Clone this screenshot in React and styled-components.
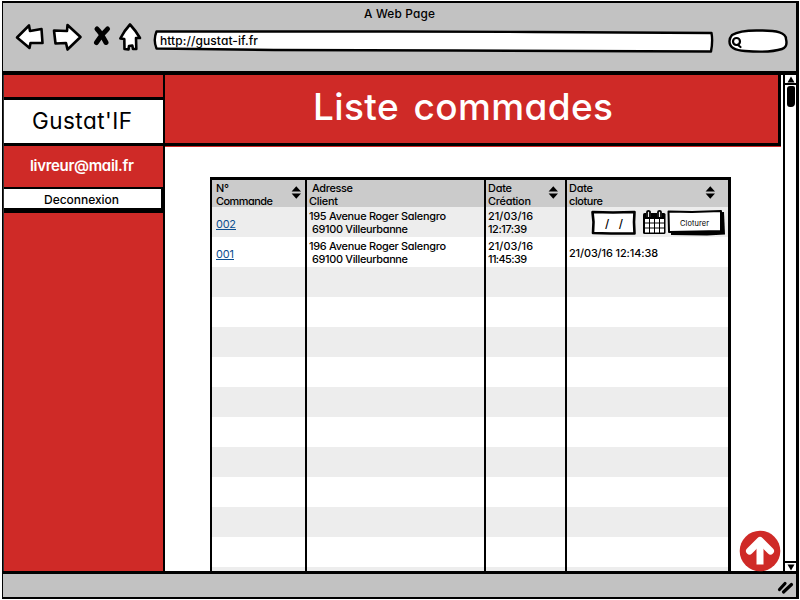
import React, { useLayoutEffect, useRef, useState } from "react";
import styled, { createGlobalStyle } from "styled-components";

const RED = "#cf2a27";
const GREY = "#c2c2c2";

const GlobalStyle = createGlobalStyle`
  * { box-sizing: border-box; }
  html, body { margin: 0; padding: 0; background: #fff; }
  body {
    width: 800px; height: 600px; overflow: hidden;
    font-family: Inter, "Open Sans", sans-serif;
    font-feature-settings: "cv11";
    color: #000;
  }
  svg { display: block; overflow: visible; flex: none; }
`;

const Window = styled.div`
  width: 797px;
  height: 598px;
  margin: 1px 1px 1px 2px;
  border: 2px solid #000;
  border-left-width: 1px;
  border-right-width: 3px;
  display: flex;
  flex-direction: column;
`;

const Chrome = styled.header`
  height: 68px;
  background: ${GREY};
  padding-top: 1px;
`;

const WindowTitle = styled.div`
  height: 18px;
  line-height: 17px;
  padding-left: 361px;
`;

const Toolbar = styled.div`
  display: flex;
  align-items: flex-start;
  padding-left: 13px;
`;

const UrlBar = styled.div`
  position: relative;
  width: 560px;
  height: 23px;
  margin: 8px 0 0 10px;
`;

const Backdrop = styled.svg`
  position: absolute;
  inset: 0;
`;

const UrlText = styled.div`
  position: relative;
  padding-left: 6px;
  line-height: 19px;
`;

const SearchBox = styled.div`
  margin: 7px 0 0 14px;
`;

const Body = styled.main`
  flex: 1;
  display: flex;
  border-top: 4px solid #000;
  border-bottom: 3px solid #000;
  min-height: 0;
`;

const Sidebar = styled.aside`
  width: 162px;
  background: ${RED};
  border-left: 1px solid #333;
  border-right: 2px solid #000;
  display: flex;
  flex-direction: column;
`;

const Brand = styled.div`
  height: 49px;
  margin-top: 22px;
  background: #fff;
  border-top: 3px solid #000;
  border-bottom: 3px solid #000;
  padding-left: 28px;
  line-height: 42px;
`;

const UserMail = styled.div`
  height: 41px;
  line-height: 39px;
  padding-left: 26px;
  color: #fff;
`;

const Logout = styled.div`
  height: 26px;
  background: #fff;
  border: solid #000;
  border-width: 2px 2px 5px 0;
  padding-left: 40px;
  line-height: 18px;
`;

const Page = styled.section`
  width: 618px;
  display: flex;
  flex-direction: column;
  background: #fff;
  min-height: 0;
`;

const Banner = styled.h1`
  flex: none;
  margin: 0;
  height: 71px;
  width: 616px;
  background: ${RED};
  border-right: 3px solid #000;
  border-bottom: 3px solid #000;
  box-shadow: 0 1px 0 ${RED};
  color: #fff;
  padding-left: 148px;
  line-height: 63px;
  word-spacing: 4px;
`;

const Content = styled.div`
  flex: 1;
  display: flex;
  padding: 31px 0 0 45px;
  min-height: 0;
`;

const Grid = styled.div`
  width: 521px;
  border: solid #000;
  border-width: 3px 3px 0 2px;
  display: flex;
  flex-direction: column;
  overflow: hidden;
`;

const Row = styled.div`
  flex: none;
  display: grid;
  grid-template-columns: 95px 179px 81px 161px;
  height: ${(p) => (p.$head ? 27 : 30)}px;
  background: ${(p) => (p.$head ? "#cbcbcb" : p.$odd ? "#ededed" : "#fff")};
`;

const Cell = styled.div`
  display: flex;
  align-items: center;
  justify-content: space-between;
  padding: 0 ${(p) => p.$right || 0}px ${(p) => p.$bottom || 0}px ${(p) => p.$left || 2}px;
  border-right: ${(p) => (p.$last ? 0 : 2)}px solid #000;
`;

const Lines = styled.div`
  display: flex;
  flex-direction: column;
`;

const Line = styled.div`
  height: 13px;
  line-height: 13px;
  padding-left: ${(p) => p.$indent || 0}px;
`;

const OrderLink = styled.a`
  color: #0a4d8f;
  line-height: 13px;
  border-bottom: 1px solid #0a4d8f;
  height: 14px;
  margin-top: 1px;
`;

const ClosedAt = styled.div`
  line-height: 13px;
`;

const Editor = styled.div`
  display: flex;
  align-items: flex-start;
  padding: 2px 0 0 22px;
`;

const DateField = styled.div`
  position: relative;
  width: 45px;
  height: 26px;
  padding-left: 14px;
  line-height: 25px;
`;

const CalendarSlot = styled.div`
  margin: 0 1px 0 7px;
`;

const CloseButton = styled.div`
  position: relative;
  width: 59px;
  height: 26px;
  padding-left: 13px;
  line-height: 21px;
`;

const FloatingUp = styled.div`
  position: absolute;
  left: 739px;
  top: 530px;
`;

const Scrollbar = styled.div`
  width: 13px;
  border-left: 2px solid #000;
  background: #fff;
  display: flex;
  flex-direction: column;
`;

const ScrollButton = styled.div`
  height: 10px;
  padding: 1px 0 0 2px;
  border: solid #000;
  border-width: ${(p) => (p.$bottom ? "2px 0 0" : "0 0 2px")};
`;

const Track = styled.div`
  flex: 1;
  padding: 1px 0 0 2px;
`;

const Thumb = styled.div`
  width: 8px;
  height: 21px;
  background: #000;
  border-radius: 3px 2px 4px 3px;
`;

const Footer = styled.footer`
  height: 23px;
  background: ${GREY};
  display: flex;
  justify-content: flex-end;
  padding: 7px 2px 0 0;
`;

const Word = styled.span`
  position: relative;
  display: inline-block;
  white-space: pre;
  font-size: ${(p) => p.$size}px;
  font-weight: ${(p) => p.$weight};
`;

// Text whose tracking is adjusted so that it fills the given width.
function Text({ children, width, size = 10.9, weight = 500 }) {
  const ref = useRef(null);
  const [tracking, setTracking] = useState(0);
  useLayoutEffect(() => {
    const natural = ref.current.getBoundingClientRect().width;
    setTracking((width - natural) / Math.max(1, children.length - 1));
  }, []);
  return (
    <Word ref={ref} $size={size} $weight={weight} style={{ letterSpacing: tracking, marginRight: -tracking }}>
      {children}
    </Word>
  );
}

const ink = { stroke: "#000", strokeWidth: 2.6, strokeLinejoin: "round", strokeLinecap: "round", fill: "#fff" };

const NavIcons = () => (
  <svg width="128" height="30" viewBox="16 22 128 30">
    <path {...ink} d="M17 37.500 L29 25.500 L30 31 L41.500 29 L42.500 43 L30.500 43 L29.500 48 Z" />
    <path {...ink} d="M54 30.500 L67 31 L67.500 25 L80.500 37 L67.500 49.500 L66 43 L55.500 43.500 Z" />
    <path d="M97 29 Q101 33 106 42.500 M107.500 29 Q101 35 96.500 42.500" stroke="#000" strokeWidth="5" strokeLinecap="round" fill="none" />
    <path {...ink} d="M130 24.500 Q136 31 140 38 L136 38 L136.300 49 L133 49 L132.300 45.500 L129 46 L128.500 49.500 L124.500 49 L124.300 39 L120.300 38.500 Q124 31 130 24.500 Z" />
  </svg>
);

const SortIcon = () => (
  <svg width="10" height="13" viewBox="0 0 10 13">
    <path d="M5.300 -.7 L10 4.500 H.6Z M5.300 11.700 L10 6.500 H.6Z" />
  </svg>
);

const CalendarIcon = () => (
  <svg width="23" height="24" viewBox="0 0 23 24">
    <rect x="0" y="3" width="22.500" height="21" rx="1.500" />
    <path fill="#ededed" d="M3 2h5v5H3zM14 2h5v5h-5z" />
    <path fill="none" stroke="#000" strokeWidth="1.800" d="M4 8V2Q4 .8 5.500 .8T7 2V7M15 7V2Q15 .8 16.500 .8T18 2V7" />
    <path fill="#fff" d="M2 9h4v3.500H2zM7 9h4v3.500H7zM12 9h4v3.500h-4zM17 9h4v3.500h-4zM2 13.500h4v4H2zM7 13.500h4v4H7zM12 13.500h4v4h-4zM17 13.500h4v4h-4zM2 18.500h4v4H2zM7 18.500h4v4H7zM12 18.500h4v4h-4zM17 18.500h4v4h-4z" />
  </svg>
);

const HEAD = [
  { lines: [["N°", 13], ["Commande", 57]], left: 4, right: 4, sort: true },
  { lines: [["Adresse", 41, 3], ["Client", 29]], left: 2 },
  { lines: [["Date", 24], ["Création", 43]], left: 2, right: 7, sort: true },
  { lines: [["Date", 24], ["cloture", 34]], left: 2, right: 13, sort: true, last: true },
];

const ORDERS = [
  { id: "002", idWidth: 20, street: "195 Avenue Roger Salengro", time: "12:17:39", timeWidth: 39 },
  { id: "001", idWidth: 18, street: "196 Avenue Roger Salengro", time: "11:45:39", timeWidth: 39, closed: "21/03/16 12:14:38" },
];

const Stack = ({ lines }) => (
  <Lines>
    {lines.map(([t, w, indent]) => (
      <Line key={t} $indent={indent}><Text width={w}>{t}</Text></Line>
    ))}
  </Lines>
);

const CloseEditor = () => (
  <Editor>
    <DateField>
      <Backdrop width="45" height="26" viewBox="0 0 45 26">
        <path {...ink} d="M1.500 2 L22 2.500 L43.500 2 L43 12 L43.500 23.500 L20 23.500 L2 23 L2.500 12Z" />
      </Backdrop>
      <Text width={18} size={11.5}>{"/  /"}</Text>
    </DateField>
    <CalendarSlot><CalendarIcon /></CalendarSlot>
    <CloseButton>
      <Backdrop width="59" height="26" viewBox="0 0 59 26">
        <path d="M4 4 L57 2 L58 24.500 L40 25.500 L4 25Z" />
        <path {...ink} strokeWidth="2" d="M1.500 1.500 L25 2 L54 1 L54 21 L30 21.500 L2 22Z" />
      </Backdrop>
      <Text width={29} size={7.4} weight={400}>Cloturer</Text>
    </CloseButton>
  </Editor>
);

export default function App() {
  return (
    <>
      <GlobalStyle />
      <Window>
        <Chrome>
          <WindowTitle><Text width={71} size={11.8}>A Web Page</Text></WindowTitle>
          <Toolbar>
            <NavIcons />
            <UrlBar>
              <Backdrop width="560" height="23" viewBox="0 0 560 23">
                <path {...ink} strokeWidth="2.400" d="M2.500 1.500 L240 1.500 L380 2 L557.500 3 Q559 11 557 21.500 L300 20.500 L120 20 L2.500 18.500 Q-1 10 2.500 1.500Z" />
              </Backdrop>
              <UrlText><Text width={98} size={12}>http://gustat-if.fr</Text></UrlText>
            </UrlBar>
            <SearchBox>
              <svg width="60" height="24" viewBox="0 0 60 24">
                <path {...ink} strokeWidth="2.400" d="M4 6 Q12 1 32 1.500 Q58 1 58 10 Q60 18 54 20 Q42 24 17 22 Q1 21 1.500 12 Q1.500 9 4 6Z" />
                <circle cx="8.500" cy="12.500" r="3.500" fill="none" stroke="#000" strokeWidth="2.200" />
                <path d="M10 16 L12.500 18" stroke="#000" strokeWidth="2.200" strokeLinecap="round" />
              </svg>
            </SearchBox>
          </Toolbar>
        </Chrome>
        <Body>
          <Sidebar>
            <Brand><Text width={100} size={22.5} weight={400}>Gustat'IF</Text></Brand>
            <UserMail><Text width={104} size={15} weight={600}>livreur@mail.fr</Text></UserMail>
            <Logout><Text width={75} size={12}>Deconnexion</Text></Logout>
          </Sidebar>
          <Page>
            <Banner><Text width={300} size={37} weight={550}>Liste commades</Text></Banner>
            <Content>
              <Grid>
                <Row $head>
                  {HEAD.map((h, i) => (
                    <Cell key={i} $left={h.left} $right={h.right} $bottom={3} $last={h.last}>
                      <Stack lines={h.lines} />
                      {h.sort && <SortIcon />}
                    </Cell>
                  ))}
                </Row>
                {Array.from({ length: 13 }, (_, i) => {
                  const o = ORDERS[i];
                  return (
                    <Row key={i} $odd={i % 2 === 0}>
                      <Cell $left={4}>{o && <OrderLink><Text width={o.idWidth} weight={400}>{o.id}</Text></OrderLink>}</Cell>
                      <Cell $bottom={2}>{o && <Stack lines={[[o.street, 137], ["69100 Villeurbanne", 96, 3]]} />}</Cell>
                      <Cell $bottom={2}>{o && <Stack lines={[["21/03/16", 45], [o.time, o.timeWidth]]} />}</Cell>
                      <Cell $last>
                        {o && (o.closed ? <ClosedAt><Text width={89}>{o.closed}</Text></ClosedAt> : <CloseEditor />)}
                      </Cell>
                    </Row>
                  );
                })}
              </Grid>
            </Content>
          </Page>
          <Scrollbar>
            <ScrollButton>
              <svg width="8" height="7" viewBox="0 0 8 7"><path d="M4 .5 L7.500 6.500 H.5Z" /></svg>
            </ScrollButton>
            <Track><Thumb /></Track>
            <ScrollButton $bottom>
              <svg width="8" height="7" viewBox="0 0 8 7"><path d="M4 6.500 L7.500 .5 H.5Z" /></svg>
            </ScrollButton>
          </Scrollbar>
        </Body>
        <Footer>
          <svg width="16" height="14" viewBox="0 0 16 14">
            <path d="M1.500 8.500 L7 2.500 M5.500 11 L13.500 3.500" stroke="#000" strokeWidth="3.200" strokeLinecap="round" />
          </svg>
        </Footer>
        <FloatingUp>
          <svg width="42" height="42" viewBox="0 0 42 42">
            <circle cx="21" cy="21" r="20.300" fill={RED} />
            <path fill="none" stroke="#fff" strokeWidth="7" d="M21 34.500 V12" />
            <path fill="none" stroke="#fff" strokeWidth="7" strokeLinejoin="round" strokeLinecap="round" d="M10.500 21 L21 10.500 L31.500 21" />
          </svg>
        </FloatingUp>
      </Window>
    </>
  );
}
